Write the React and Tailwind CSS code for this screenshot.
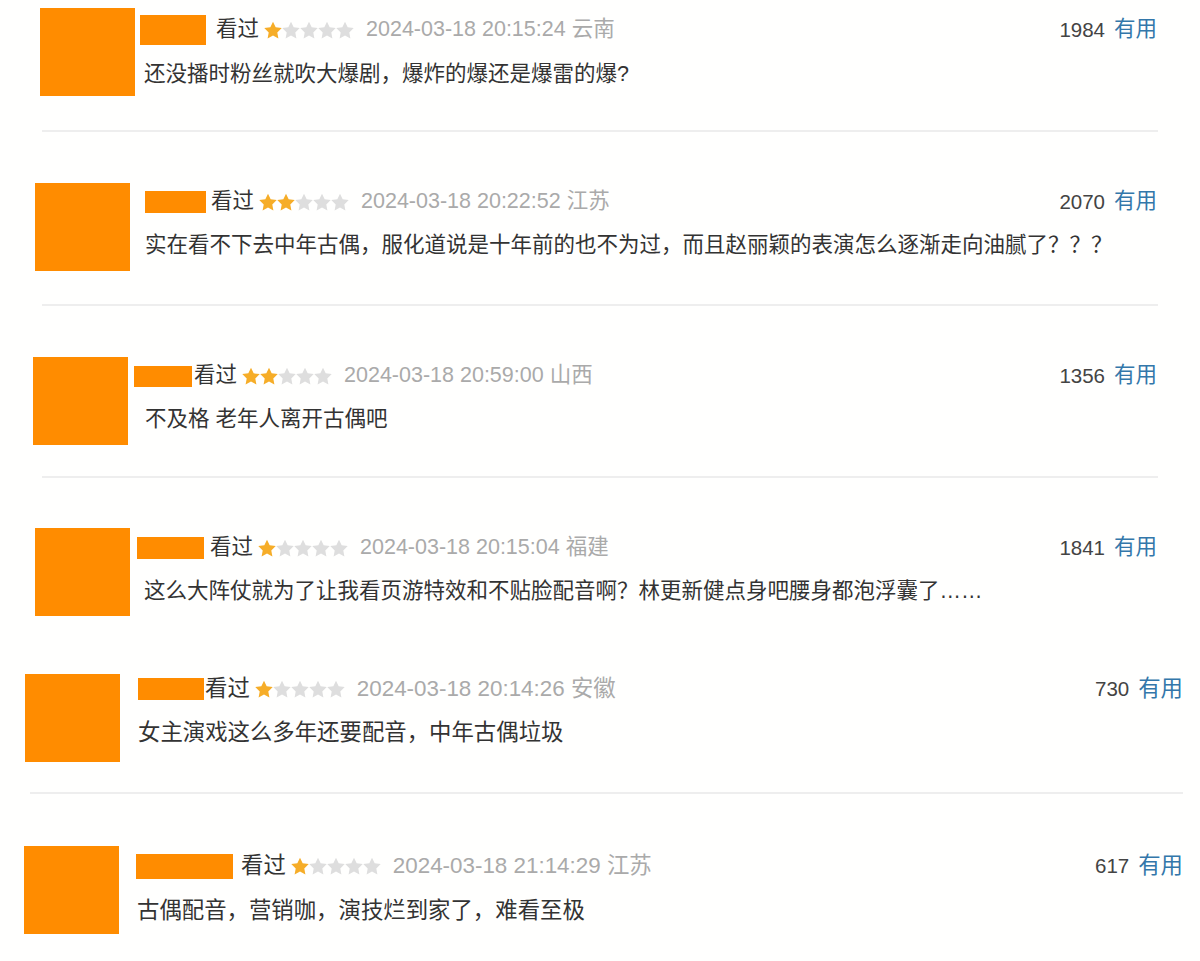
const reviews = [
  {
    rowClass: "mt-[8px] pl-[40px] pr-[43px] text-[21.5px]",
    gapClass: "ml-[5px]",
    headClass: "mt-[7px]",
    nameClass: "w-[66px] h-[30px]",
    seenClass: "ml-[10px]",
    textClass: "mt-[15px] ml-[4px]",
    stars: 1,
    date: "2024-03-18 20:15:24",
    place: "云南",
    votes: 1984,
    text: "还没播时粉丝就吹大爆剧，爆炸的爆还是爆雷的爆?",
  },
  {
    rowClass: "mt-[51px] pl-[35px] pr-[43px] text-[21.5px]",
    gapClass: "ml-[15px]",
    headClass: "mt-[4px]",
    nameClass: "w-[61px] h-[22px]",
    seenClass: "ml-[5px]",
    textClass: "mt-[14px] ml-0",
    stars: 2,
    date: "2024-03-18 20:22:52",
    place: "江苏",
    votes: 2070,
    text: "实在看不下去中年古偶，服化道说是十年前的也不为过，而且赵丽颖的表演怎么逐渐走向油腻了？？？",
  },
  {
    rowClass: "mt-[51px] pl-[33px] pr-[43px] text-[21.5px]",
    gapClass: "ml-[6px]",
    headClass: "mt-[4px]",
    nameClass: "w-[58px] h-[21px]",
    seenClass: "ml-[2px]",
    textClass: "mt-[14px] ml-[11px]",
    stars: 2,
    date: "2024-03-18 20:59:00",
    place: "山西",
    votes: 1356,
    text: "不及格 老年人离开古偶吧",
  },
  {
    rowClass: "mt-[50px] pl-[35px] pr-[43px] text-[21.5px]",
    gapClass: "ml-[7px]",
    headClass: "mt-[5px]",
    nameClass: "w-[67px] h-[22px]",
    seenClass: "ml-[6px]",
    textClass: "mt-[14px] ml-[7px]",
    stars: 1,
    date: "2024-03-18 20:15:04",
    place: "福建",
    votes: 1841,
    text: "这么大阵仗就为了让我看页游特效和不贴脸配音啊？林更新健点身吧腰身都泡浮囊了……",
  },
  {
    rowClass: "mt-[58px] pl-[25px] pr-[17px] text-[22.4px]",
    gapClass: "ml-[18px]",
    headClass: "mt-0",
    nameClass: "w-[66px] h-[22px]",
    seenClass: "ml-[1px]",
    textClass: "mt-[14px] ml-0",
    stars: 1,
    date: "2024-03-18 20:14:26",
    place: "安徽",
    votes: 730,
    text: "女主演戏这么多年还要配音，中年古偶垃圾",
  },
  {
    rowClass: "mt-[52px] pl-[24px] pr-[17px] text-[22.4px]",
    gapClass: "ml-[17px]",
    headClass: "mt-[5px]",
    nameClass: "w-[97px] h-[25px]",
    seenClass: "ml-[8px]",
    textClass: "mt-[15px] ml-[1px]",
    stars: 1,
    date: "2024-03-18 21:14:29",
    place: "江苏",
    votes: 617,
    text: "古偶配音，营销咖，演技烂到家了，难看至极",
  },
]

const dividers = [
  "mt-[34px] ml-[42px] mr-[42px]",
  "mt-[33px] ml-[42px] mr-[42px]",
  "mt-[31px] ml-[42px] mr-[42px]",
  null,
  "mt-[30px] ml-[30px] mr-[17px]",
]

const Star = ({ on }) => (
  <svg width="18" height="18" viewBox="1.5 1.5 21 20" className="shrink-0">
    <path
      d="M12 1.8l3.1 6.6 7.1.9-5.2 5 1.3 7.1L12 18l-6.3 3.4L7 14.3l-5.2-5 7.1-.9z"
      fill={on ? "#f6ad28" : "#dedede"}
    />
  </svg>
)

const Review = ({ r }) => (
  <div className={`flex items-start h-[88px] ${r.rowClass}`}>
    <div className="w-[95px] h-[88px] shrink-0 bg-[#ff8c00]" />
    <div className={`flex-1 flex flex-col ${r.gapClass}`}>
      <div className={`flex items-center h-[30px] ${r.headClass}`}>
        <div className={`shrink-0 bg-[#ff8c00] ${r.nameClass}`} />
        <span className={`text-[#333] ${r.seenClass}`}>看过</span>
        <div className="flex items-center ml-[5px]">
          {[0, 1, 2, 3, 4].map((i) => (
            <Star key={i} on={i < r.stars} />
          ))}
        </div>
        <span className="ml-[12px] text-[#aaa]">
          {r.date} {r.place}
        </span>
        <div className="flex-1" />
        <span className="text-[20.5px] text-[#444]">{r.votes}</span>
        <span className="ml-[9px] text-[#3377aa]">有用</span>
      </div>
      <div className={`h-[30px] flex items-center text-[#333] whitespace-nowrap ${r.textClass}`}>
        {r.text}
      </div>
    </div>
  </div>
)

export default function App() {
  return (
    <div className="w-[1200px] h-[961px] overflow-hidden bg-[#fffffe] font-['Liberation_Sans','Noto_Sans_CJK_SC',sans-serif] leading-none flex flex-col">
      {reviews.map((r, i) => (
        <div key={i}>
          <Review r={r} />
          {dividers[i] && <div className={`h-[2px] bg-[#eeeeee] ${dividers[i]}`} />}
        </div>
      ))}
    </div>
  )
}
